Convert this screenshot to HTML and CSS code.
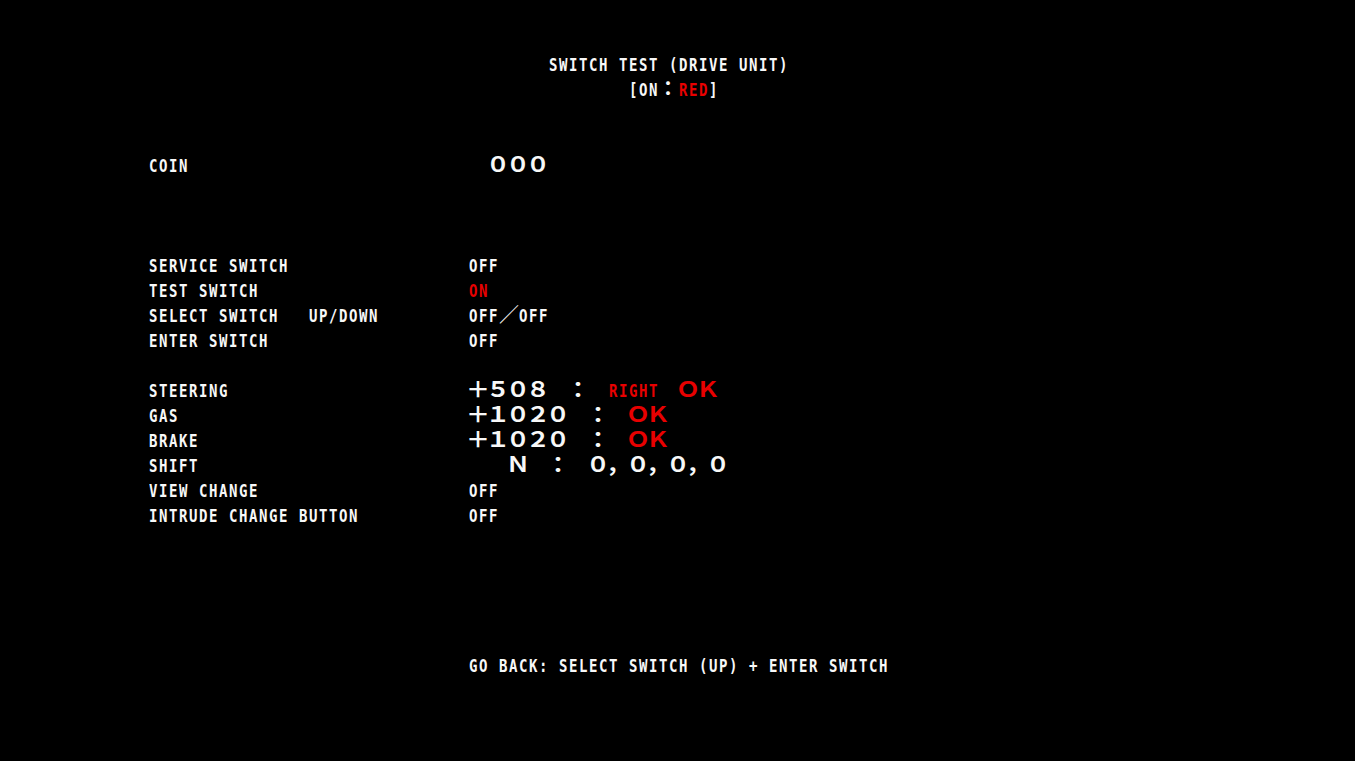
FILE: index.html
```html
<!DOCTYPE html>
<html lang="ja">
<head>
<meta charset="utf-8">
<title>SWITCH TEST (DRIVE UNIT)</title>
<link rel="stylesheet" href="styles.css">
</head>
<body>
<div class="screen">
  <header class="title">
    <div class="title-main narrow">SWITCH TEST (DRIVE UNIT)</div>
    <div class="title-sub"><span class="n">[ON</span><span class="colon">：</span><span class="n red">RED</span><span class="n">]</span></div>
  </header>

  <section class="table coin">
    <div class="label narrow">COIN</div>
    <div class="value"><span class="wide">　０００</span></div>
  </section>

  <section class="table switches">
    <div class="label narrow">SERVICE SWITCH</div>
    <div class="value"><span class="n">OFF</span></div>
    <div class="label narrow">TEST SWITCH</div>
    <div class="value"><span class="n red">ON</span></div>
    <div class="label narrow">SELECT SWITCH&nbsp;&nbsp;&nbsp;UP/DOWN</div>
    <div class="value"><span class="n">OFF</span><span class="slash">／</span><span class="n">OFF</span></div>
    <div class="label narrow">ENTER SWITCH</div>
    <div class="value"><span class="n">OFF</span></div>
  </section>

  <section class="table inputs">
    <div class="label narrow">STEERING</div>
    <div class="value"><span class="wide">＋５０８　：　</span><span class="n red">RIGHT</span><span class="wide red">　ＯＫ</span></div>
    <div class="label narrow">GAS</div>
    <div class="value"><span class="wide">＋１０２０　：　</span><span class="wide red">ＯＫ</span></div>
    <div class="label narrow">BRAKE</div>
    <div class="value"><span class="wide">＋１０２０　：　</span><span class="wide red">ＯＫ</span></div>
    <div class="label narrow">SHIFT</div>
    <div class="value"><span class="wide">　　Ｎ　：　０，０，０，０</span></div>
    <div class="label narrow">VIEW CHANGE</div>
    <div class="value"><span class="n">OFF</span></div>
    <div class="label narrow">INTRUDE CHANGE BUTTON</div>
    <div class="value"><span class="n">OFF</span></div>
  </section>

  <footer class="footer narrow">GO BACK: SELECT SWITCH (UP) + ENTER SWITCH</footer>
</div>
</body>
</html>
```

FILE: styles.css
```css
html, body {
  margin: 0;
  padding: 0;
  background: #000;
}

body {
  width: 1355px;
  height: 761px;
  overflow: hidden;
  color: #f8f8f8;
  font-family: "DejaVu Sans Mono", "Liberation Mono", monospace;
  font-weight: bold;
  font-size: 14px;
  letter-spacing: 1.57px;
  line-height: 25px;
}

.screen {
  display: flex;
  flex-direction: column;
  padding-top: 54px;
}

/* tall, condensed look of the test-menu font */
.narrow {
  white-space: pre;
  transform-origin: 0 17.3px;
  transform: scaleY(1.32);
}

.n {
  display: inline-block;
  white-space: pre;
  transform-origin: 0 17.3px;
  transform: scaleY(1.32);
}

.title {
  display: flex;
  flex-direction: column;
}

.title-main {
  padding-left: 549px;
}

.title-sub {
  padding-left: 629px;
}

.colon {
  display: inline-block;
  width: 20px;
  text-align: center;
  font-family: "Noto Sans CJK JP", sans-serif;
  font-size: 20px;
  letter-spacing: 0;
  line-height: 12px;
  transform: translateX(-1px);
}

.table {
  display: grid;
  grid-template-columns: 320px 1fr;
  grid-auto-rows: 25px;
  margin-left: 149px;
}

.coin {
  margin-top: 51px;
}

.switches {
  margin-top: 75px;
}

.inputs {
  margin-top: 25px;
}

.value {
  white-space: pre;
}

/* wide, extended digits */
.wide {
  display: inline-block;
  white-space: pre;
  font-family: "Noto Sans CJK JP", "Noto Sans CJK SC", sans-serif;
  font-weight: bold;
  font-size: 24px;
  letter-spacing: -4px;
  line-height: 12px;
  transform-origin: 0 16.46px;
  transform: translateX(-3px) scaleY(0.88);
}

.slash {
  display: inline-block;
  width: 20px;
  font-family: "Noto Sans CJK JP", sans-serif;
  font-weight: normal;
  font-size: 20px;
  letter-spacing: 0;
  line-height: 12px;
}

.red {
  color: #e80000;
}

.footer {
  margin-top: 125px;
  padding-left: 469px;
}
```
